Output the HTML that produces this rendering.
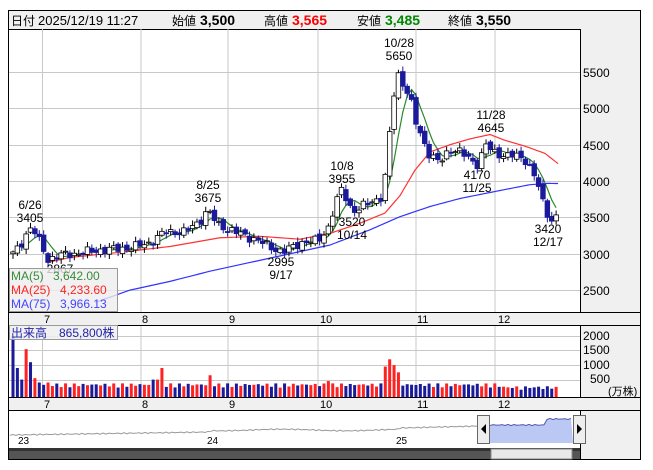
<!DOCTYPE html>
<html><head><meta charset="utf-8"><style>
html,body{margin:0;padding:0;background:#fff;width:653px;height:470px;overflow:hidden}
svg{display:block;font-family:"Liberation Sans","Noto Sans CJK JP",sans-serif}
</style></head><body>
<svg id="s" width="653" height="470" viewBox="0 0 653 470" xmlns="http://www.w3.org/2000/svg">
<rect x="0" y="0" width="653" height="470" fill="#fff"/>
<rect x="8.5" y="10.5" width="632" height="19" fill="#f0f0f0" stroke="#000"/>
<g font-size="12" fill="#000">
<text x="11" y="25">日付</text><text x="38" y="25" font-size="13">2025/12/19 11:27</text>
<text x="172" y="25">始値</text><text x="200" y="25" font-size="14" font-weight="bold">3,500</text>
<text x="264" y="25">高値</text><text x="292" y="25" font-size="14" font-weight="bold" fill="#f00">3,565</text>
<text x="357" y="25">安値</text><text x="385" y="25" font-size="14" font-weight="bold" fill="#080">3,485</text>
<text x="448" y="25">終値</text><text x="476" y="25" font-size="14" font-weight="bold">3,550</text>
</g>
<rect x="580" y="29" width="60" height="283" fill="#f0f0f0"/>
<rect x="580" y="325" width="60" height="72" fill="#f0f0f0"/>
<rect x="580" y="410" width="60" height="49" fill="#f0f0f0"/>
<rect x="8" y="312" width="632" height="13" fill="#f0f0f0"/>
<rect x="8" y="397" width="632" height="13" fill="#f0f0f0"/>
<g id="grid" stroke="#c8c8c8" stroke-width="1"></g>
<g id="ma"></g>
<g id="candles"></g>
<g id="vol"></g>
<g stroke="#000" stroke-width="1" fill="none">
<line x1="580.5" y1="29" x2="580.5" y2="312"/>
<line x1="580.5" y1="325" x2="580.5" y2="397"/>
<line x1="580.5" y1="410" x2="580.5" y2="459"/>
<line x1="8" y1="312.5" x2="640" y2="312.5"/>
<line x1="8" y1="325.5" x2="640" y2="325.5"/>
<line x1="8" y1="397.5" x2="640" y2="397.5"/>
<line x1="8" y1="410.5" x2="640" y2="410.5"/>
<rect x="8.5" y="10.5" width="632" height="449"/>
</g>
<g font-size="12" fill="#000">
<text x="583" y="77">5500</text><text x="583" y="113">5000</text><text x="583" y="150">4500</text>
<text x="583" y="186">4000</text><text x="583" y="222">3500</text><text x="583" y="259">3000</text>
<text x="583" y="295">2500</text>
<text x="583" y="340">2000</text><text x="583" y="354">1500</text><text x="583" y="369">1000</text>
<text x="590" y="383">500</text><text x="608" y="395" font-size="11">(万株)</text>
</g>
<g font-size="11" fill="#000">
<text x="44" y="323">7</text><text x="142" y="323">8</text><text x="229" y="323">9</text><text x="320" y="323">10</text><text x="417" y="323">11</text><text x="498" y="323">12</text>
<text x="44" y="408">7</text><text x="142" y="408">8</text><text x="229" y="408">9</text><text x="320" y="408">10</text><text x="417" y="408">11</text><text x="498" y="408">12</text>
</g>
<g font-size="12" fill="#000" text-anchor="middle">
<text x="399" y="47">10/28</text><text x="399" y="60">5650</text>
<text x="30" y="209">6/26</text><text x="30" y="222">3405</text>
<text x="208" y="189">8/25</text><text x="208" y="202">3675</text>
<text x="342" y="170">10/8</text><text x="342" y="183">3955</text>
<text x="352" y="226">3520</text><text x="352" y="239">10/14</text>
<text x="491" y="119">11/28</text><text x="491" y="132">4645</text>
<text x="477" y="179">4170</text><text x="477" y="192">11/25</text>
<text x="548" y="233">3420</text><text x="548" y="246">12/17</text>
<text x="281" y="266">2995</text><text x="281" y="279">9/17</text>
<text x="60" y="273">2867</text>
</g>
<rect x="9.5" y="268.5" width="108" height="43" fill="#eeeeee" fill-opacity="0.8" stroke="#999"/>
<g font-size="12">
<text x="11" y="280" fill="#3a8a3a">MA(5)</text><text x="53" y="280" fill="#3a8a3a">3,642.00</text>
<text x="11" y="294" fill="#f22">MA(25)</text><text x="60" y="294" fill="#f22">4,233.60</text>
<text x="11" y="308" fill="#44f">MA(75)</text><text x="60" y="308" fill="#44f">3,966.13</text>
</g>
<rect x="9.5" y="325.5" width="108" height="14" fill="#eeeeee" fill-opacity="0.85" stroke="#999"/>
<text x="11" y="337" font-size="12" fill="#22a">出来高　865,800株</text>
<g id="nav"></g>
<g font-size="10" fill="#000"><text x="18" y="444">23</text><text x="207" y="444">24</text><text x="396" y="444">25</text></g>
<rect x="9" y="448" width="571" height="11" fill="#555"/>
<rect x="9" y="448" width="571" height="3" fill="#333"/>
<rect x="491" y="449" width="81" height="10" fill="#e8e8e8" stroke="#888"/>
<rect x="477.5" y="415.5" width="12" height="28" fill="#eee" stroke="#666"/>
<polygon points="486,424 486,434 481,429" fill="#000"/>
<rect x="573.5" y="415.5" width="12" height="28" fill="#eee" stroke="#666"/>
<polygon points="577,424 577,434 582,429" fill="#000"/>
</svg>
<script>
var NS="http://www.w3.org/2000/svg";
function el(p,t,a){var e=document.createElementNS(NS,t);for(var k in a)e.setAttribute(k,a[k]);document.getElementById(p).appendChild(e);return e;}
[42.5,141,228,318,416,495].forEach(function(x){el("grid","line",{x1:x,y1:29,x2:x,y2:312});el("grid","line",{x1:x,y1:325,x2:x,y2:397});});
[72,108,145,181,217,254,290].forEach(function(y){el("grid","line",{x1:9,y1:y+.5,x2:580,y2:y+.5});});
[336,350,365,380].forEach(function(y){el("grid","line",{x1:9,y1:y+.5,x2:580,y2:y+.5});});
function Y(p){return 72+(5500-p)*0.0727;}
var W=[[13,3000],[20,3100],[25,3250],[32,3380],[40,3150],[48,2920],[60,2980],[75,3000],[100,3050],[130,3080],[150,3150],[165,3300],[185,3300],[200,3450],[208,3600],[218,3400],[235,3300],[255,3200],[270,3100],[283,3020],[300,3150],[318,3180],[328,3350],[336,3700],[342,3900],[350,3650],[356,3580],[368,3700],[382,3780],[386,4100],[390,4700],[394,5200],[399,5500],[404,5300],[410,5150],[416,4800],[422,4600],[430,4350],[440,4250],[450,4450],[460,4400],[470,4300],[478,4230],[486,4500],[493,4400],[505,4350],[515,4350],[525,4300],[532,4150],[538,3950],[543,3700],[549,3500],[553,3450],[558,3550]];
function interp(x){for(var i=1;i<W.length;i++){if(x<=W[i][0]){var a=W[i-1],b=W[i],t=(x-a[0])/(b[0]-a[0]);return a[1]+t*(b[1]-a[1]);}}return W[W.length-1][1];}
var closes=[],xs=[],prev=3000;
var early=[[2100,0],[1000,0],[600,0],[1650,1],[1200,0],[650,1],[500,0],[420,0],[500,1]];
for(var i=0;;i++){var x=13+i*4.38;if(x>559)break;xs.push(x);
 var c=interp(x)+Math.sin(i*2.3)*45+Math.cos(i*1.1)*25;var o=prev+Math.sin(i*3.7)*30;
 var hi=Math.max(o,c)+20+Math.abs(Math.sin(i*5.1))*50,lo=Math.min(o,c)-20-Math.abs(Math.cos(i*4.3))*50;
 var up=c>=o;var col=up?"#fff":"#1a1a9a";
 el("candles","line",{x1:x,y1:Y(hi),x2:x,y2:Y(lo),stroke:up?"#000":"#1a1a9a"});
 var t=Y(Math.max(o,c)),h=Math.max(1,Y(Math.min(o,c))-t);
 el("candles","rect",{x:x-2.3,y:t,width:4.6,height:h,fill:col,stroke:up?"#000":"#1a1a9a","stroke-width":0.8});
 closes.push(c);prev=c;
 var v=320+Math.abs(Math.sin(i*1.7))*150, vr=up;
 if(i<early.length){v=early[i][0];vr=early[i][1]==1;}
 if(Math.abs(x-164)<2.2)v=1000;if(Math.abs(x-155)<4.5&&x<162)v=600;if(Math.abs(x-208)<2.2)v=750;
 if(Math.abs(x-385)<2.2)v=1050;if(Math.abs(x-390)<2.2)v=1300;if(Math.abs(x-394)<2.2)v=1100;if(Math.abs(x-399)<2.2)v=850;if(Math.abs(x-330)<2.2)v=550;
 if(x>500)v=250+Math.abs(Math.sin(i*1.3))*120;
 var vh=v*14.5/500;
 el("vol","rect",{x:x-1.5,y:397-vh,width:3,height:vh,fill:vr?"#f22":"#1a1a9a"});
}
function poly(pts,c){el("ma","polyline",{points:pts.map(function(p){return p[0]+","+p[1]}).join(" "),fill:"none",stroke:c,"stroke-width":1.2});}
var g=[];for(var i=2;i<closes.length;i++){var s=0,n=0;for(var j=Math.max(0,i-4);j<=i;j++){s+=closes[j];n++;}g.push([xs[i],Y(s/n)]);}
poly(g,"#2a8a2a");
function smooth(P){var o=[];for(var i=0;i<P.length-1;i++){for(var t=0;t<1;t+=0.1){o.push([P[i][0]+t*(P[i+1][0]-P[i][0]),Y(P[i][1]+t*(P[i+1][1]-P[i][1]))]);}}o.push([P[P.length-1][0],Y(P[P.length-1][1])]);return o;}
poly(smooth([[48,2880],[70,2950],[120,3020],[170,3100],[220,3220],[260,3240],[300,3200],[330,3280],[360,3420],[385,3560],[400,3800],[415,4150],[430,4400],[450,4500],[470,4580],[490,4640],[505,4560],[525,4480],[545,4380],[558,4240]]),"#f33");
poly(smooth([[95,2330],[130,2500],[170,2620],[210,2760],[250,2880],[290,3000],[330,3120],[370,3330],[400,3510],[430,3650],[460,3760],[500,3870],[530,3950],[548,3968],[558,3966]]),"#33f");
var nav=[];for(var x=10;x<=578;x+=3){var b=x<210?435-((x-10)/200)*3:(x<400?430-Math.sin(x/20)*0.8:(x<480?428-(x-400)/40:425));if(x>545)b=419;nav.push([x,b+Math.sin(x*0.9)*0.6]);}
var pts=nav.filter(function(p){return p[0]>=490&&p[0]<=573;});
el("nav","polygon",{points:"490,443 "+pts.map(function(p){return p[0]+","+p[1]}).join(" ")+" 573,443",fill:"#bcc8f4"});
el("nav","polyline",{points:nav.filter(function(p){return p[0]<490}).map(function(p){return p[0]+","+p[1]}).join(" "),fill:"none",stroke:"#999"});
el("nav","polyline",{points:pts.map(function(p){return p[0]+","+p[1]}).join(" "),fill:"none",stroke:"#55a"});
</script>
</body></html>
